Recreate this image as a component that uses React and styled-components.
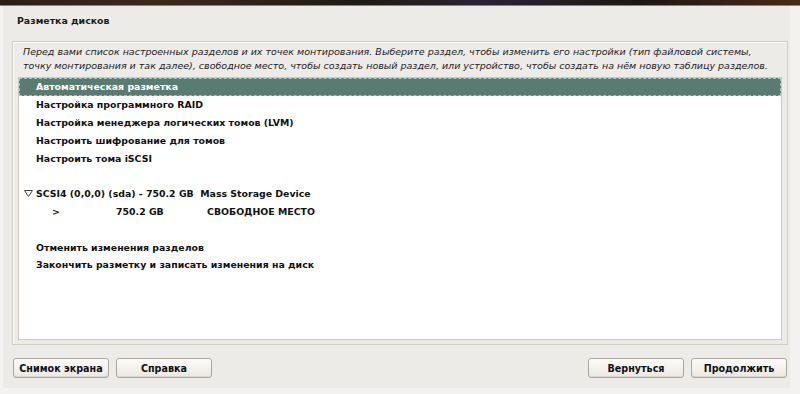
import React from 'react';
import styled, { createGlobalStyle } from 'styled-components';

const Global = createGlobalStyle`
  html, body {
    margin: 0;
    padding: 0;
    background: #f3f2f0;
    font-family: "DejaVu Sans", "Liberation Sans", sans-serif;
  }
`;

const Screen = styled.div`
  width: 800px;
  height: 394px;
  display: flex;
  flex-direction: column;
  overflow: hidden;
`;

const Banner = styled.div`
  height: 5px;
  flex: none;
  background: linear-gradient(90deg, #2a1f17 0%, #3b2a1c 20%, #1e1a14 45%, #2b2330 60%, #1d1714 80%, #4a2a16 100%);
  border-bottom: 1px solid #8a847c;
`;

const Window = styled.div`
  margin: 0 10px 0 3px;
  height: 382px;
  background: #edebe7;
  display: flex;
  flex-direction: column;
  padding: 0 0 0 9px;
  box-sizing: border-box;
`;

const Title = styled.div`
  font-weight: bold;
  font-size: 9.4px;
  color: #1a1a1a;
  padding: 9px 0 0 5px;
  height: 35px;
  box-sizing: border-box;
`;

const Frame = styled.div`
  width: 776px;
  height: 304px;
  box-sizing: border-box;
  border: 1px solid #d3cfc7;
  box-shadow: inset 1px 1px 0 #fbfaf8;
  padding: 3px 5px 4px 5px;
  display: flex;
  flex-direction: column;
`;

const Intro = styled.p`
  margin: 0 0 0 5px;
  font-style: italic;
  font-size: 9.5px;
  line-height: 14px;
  color: #222;
  height: 32px;
  white-space: pre;
`;

const List = styled.div`
  flex: 1;
  background: #fff;
  border: 1px solid #cdc9c1;
`;

const Row = styled.div`
  height: 17.8px;
  display: flex;
  align-items: center;
  font-size: 9.4px;
  font-weight: bold;
  color: ${p => (p.$active ? '#fff' : '#111')};
  background: ${p => (p.$active ? '#5a7b72' : 'transparent')};
  outline: ${p => (p.$active ? '1px dashed #a9c0b9' : 'none')};
  outline-offset: -1px;
  white-space: pre;
`;

const Toggle = styled.span`
  width: 17px;
  padding-left: 1px;
  display: flex;
  justify-content: center;
  box-sizing: border-box;
`;

const Label = styled.span`
  padding-left: ${p => p.$indent ?? 17}px;
`;

const Cell = styled.span`
  display: inline-block;
  width: ${p => p.$w}px;
`;

const Footer = styled.div`
  display: flex;
  align-items: center;
  gap: 7px;
  padding: 13px 0 0 1px;
  width: 774px;
`;

const Spacer = styled.div`
  flex: 1;
`;

const Button = styled.button`
  width: 96px;
  height: 20px;
  border: 1px solid #aca79f;
  border-radius: 3px;
  background: linear-gradient(#fcfbfa, #ebe8e3);
  font-family: "DejaVu Sans", "Liberation Sans", sans-serif;
  font-weight: bold;
  font-size: 9.6px;
  color: #111;
  padding: 0;
  box-shadow: inset 0 -1px 0 #d9d5ce;
`;

const Triangle = () => (
  <svg width="9" height="7" viewBox="0 0 9 7">
    <path d="M0.5 0.5 H8.5 L4.5 6.5 Z" fill="none" stroke="#444" strokeWidth="1" />
  </svg>
);

const items = [
  'Автоматическая разметка',
  'Настройка программного RAID',
  'Настройка менеджера логических томов (LVM)',
  'Настроить шифрование для томов',
  'Настроить тома iSCSI',
];

const intro =
  'Перед вами список настроенных разделов и их точек монтирования. Выберите раздел, чтобы изменить его настройки (тип файловой системы,\n' +
  'точку монтирования и так далее), свободное место, чтобы создать новый раздел, или устройство, чтобы создать на нём новую таблицу разделов.';

export default function App() {
  return (
    <Screen>
      <Global />
      <Banner />
      <Window>
        <Title>Разметка дисков</Title>
        <Frame>
          <Intro>{intro}</Intro>
          <List>
            {items.map((t, i) => (
              <Row key={t} $active={i === 0}>
                <Label $indent={17}>{t}</Label>
              </Row>
            ))}
            <Row />
            <Row>
              <Toggle><Triangle /></Toggle>
              <Label $indent={0}>SCSI4 (0,0,0) (sda) - 750.2 GB  Mass Storage Device</Label>
            </Row>
            <Row>
              <Label $indent={33}>
                <Cell $w={64}>&gt;</Cell>
                <Cell $w={91}>750.2 GB</Cell>
                СВОБОДНОЕ МЕСТО
              </Label>
            </Row>
            <Row />
            <Row><Label>Отменить изменения разделов</Label></Row>
            <Row><Label>Закончить разметку и записать изменения на диск</Label></Row>
          </List>
        </Frame>
        <Footer>
          <Button>Снимок экрана</Button>
          <Button>Справка</Button>
          <Spacer />
          <Button>Вернуться</Button>
          <Button>Продолжить</Button>
        </Footer>
      </Window>
    </Screen>
  );
}
